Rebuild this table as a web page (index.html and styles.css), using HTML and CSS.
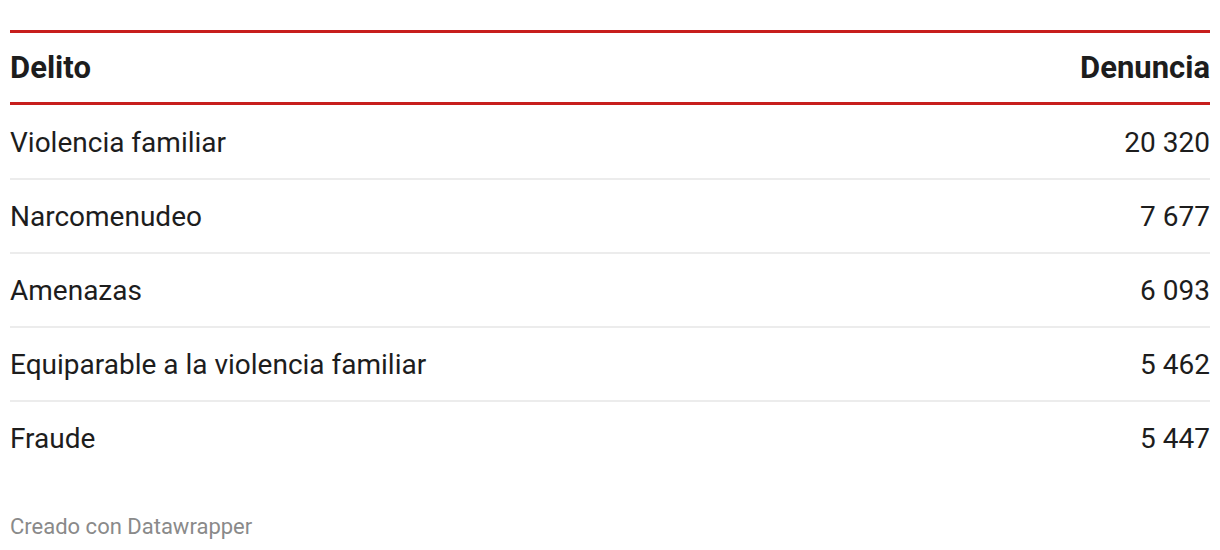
FILE: index.html
```html
<!DOCTYPE html>
<html lang="es">
<head>
<meta charset="utf-8">
<title>Delitos</title>
<link rel="stylesheet" href="styles.css">
</head>
<body>
<div class="chart">
  <div class="dw-table">
    <div class="row head">
      <div class="col-name">Delito</div>
      <div class="col-num">Denuncia</div>
    </div>
    <div class="body">
      <div class="row"><div class="col-name">Violencia familiar</div><div class="col-num">20 320</div></div>
      <div class="row"><div class="col-name">Narcomenudeo</div><div class="col-num">7 677</div></div>
      <div class="row"><div class="col-name">Amenazas</div><div class="col-num">6 093</div></div>
      <div class="row"><div class="col-name">Equiparable a la violencia familiar</div><div class="col-num">5 462</div></div>
      <div class="row"><div class="col-name">Fraude</div><div class="col-num">5 447</div></div>
    </div>
  </div>
  <div class="footer">Creado con Datawrapper</div>
</div>
</body>
</html>
```
FILE: styles.css
```css
html, body {
  margin: 0;
  padding: 0;
  background: #ffffff;
}
body {
  font-family: Roboto, "Liberation Sans", sans-serif;
  color: #1d1d1d;
}
.chart {
  padding: 30px 10px 0 10px;
}
.dw-table {
  border-top: 3px solid #c71e1d;
}
.row {
  display: flex;
  justify-content: space-between;
  align-items: center;
  height: 72px;
  font-size: 28px;
  border-bottom: 2px solid #ececec;
}
.row.head {
  height: 69px;
  font-size: 31px;
  font-weight: 700;
  border-bottom: 3px solid #c71e1d;
}
.body {
  padding-top: 1px;
}
.body .row:last-child {
  border-bottom: none;
}
.col-name { text-align: left; }
.col-num { text-align: right; }
.footer {
  margin-top: 40px;
  font-size: 22px;
  color: #8a8a8a;
}
```
